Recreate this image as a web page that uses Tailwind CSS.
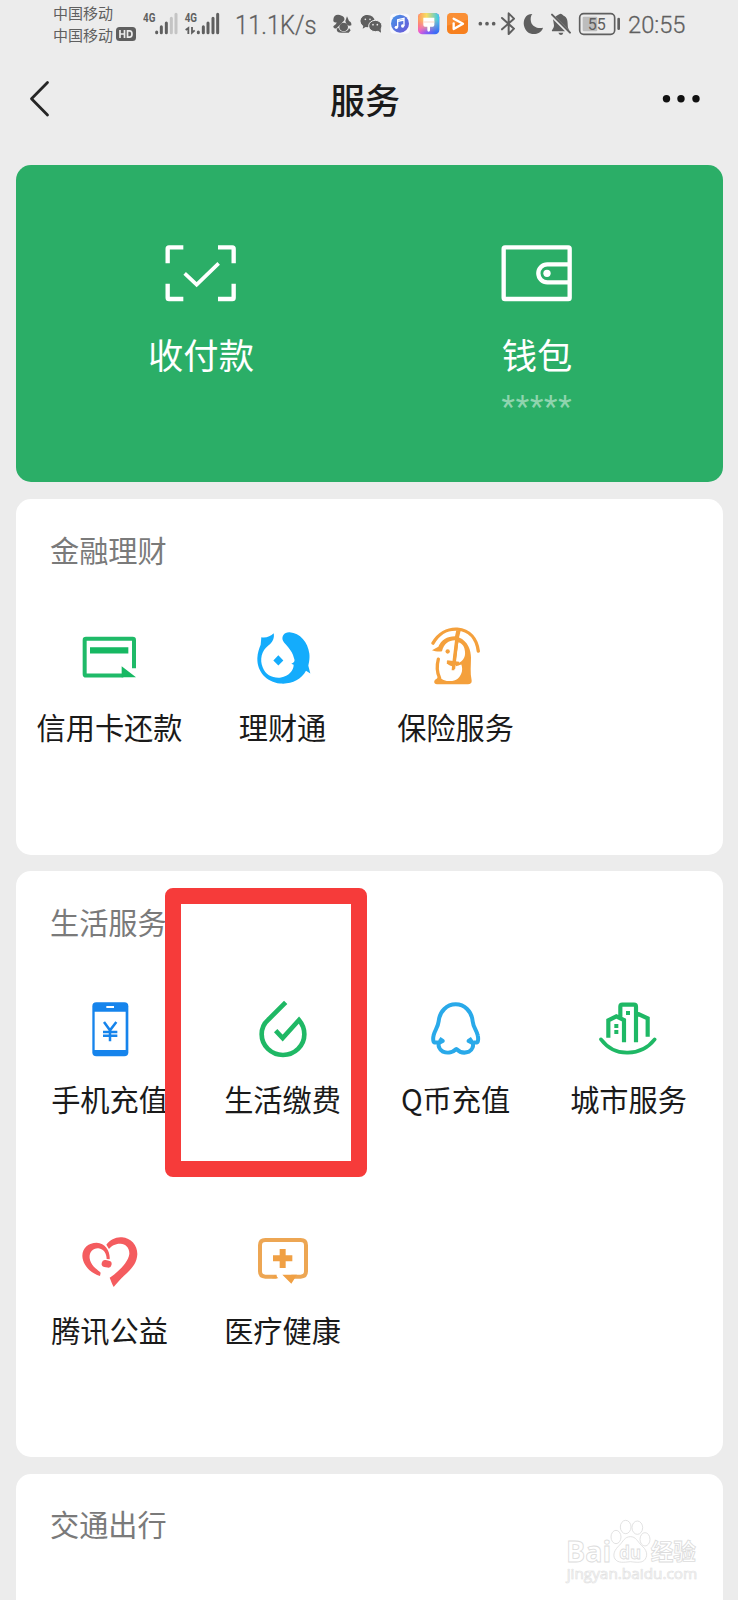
<!DOCTYPE html>
<html lang="zh-CN">
<head>
<meta charset="utf-8">
<title>服务</title>
<script src="https://cdn.jsdelivr.net/npm/@tailwindcss/browser@4"></script>
</head>
<body class="bg-[#ececec] font-['Noto_Sans_CJK_SC',sans-serif] text-[#1a1a1a]">
<div class="relative flex h-[1600px] w-[738px] flex-col overflow-hidden">

  <!-- status bar -->
  <div class="flex h-[50px] shrink-0 items-start pl-[53px] text-[#5f5f5f]">
    <div class="flex w-[90px] flex-col pt-[2px] text-[15px] leading-[21.5px]">
      <span class="whitespace-nowrap">中国移动</span>
      <div class="flex items-center gap-[3px]"><span class="whitespace-nowrap">中国移动</span>
        <svg class="h-[14px] w-[20px]" viewBox="0 0 20 14"><rect width="20" height="14" rx="3.5" fill="#5f5f5f"/><path d="M4 3v8M4 7h4.500M8.500 3v8M11.500 3.800v6.400h2q2.500 0 2.500-3.200t-2.500-3.200z" fill="none" stroke="#ececec" stroke-width="1.700"/></svg>
      </div>
    </div>
    <svg class="h-[50px] w-[40px]" viewBox="309 0 120 150"><text x="309" y="67" font-family="Roboto, sans-serif" font-weight="700" font-size="38" textLength="37" lengthAdjust="spacingAndGlyphs" fill="#5f5f5f">4G</text><g stroke-width="9" stroke-linecap="round"><path d="M350 96v2M364 80v18M379 69v29" stroke="#5f5f5f"/><path d="M394 55v43M408 43v55" stroke="#c4c4c4"/></g></svg>
    <svg class="h-[50px] w-[52px]" viewBox="429 0 156 150"><text x="434" y="67" font-family="Roboto, sans-serif" font-weight="700" font-size="38" textLength="37" lengthAdjust="spacingAndGlyphs" fill="#5f5f5f">4G</text><g fill="none" stroke="#5f5f5f"><path d="M437 90l8-6v18M456 81v17l8-7" stroke-width="5.500"/><path d="M475 96v2M490 80v18M504 69v29M519 55v43M533 43v55" stroke-width="9" stroke-linecap="round"/></g></svg>
    <svg class="h-[50px] w-[95px]" viewBox="0 0 95 50"><text x="0" y="33.700" font-family="Roboto, sans-serif" font-weight="300" font-size="25" textLength="81.500" lengthAdjust="spacingAndGlyphs" fill="#5f5f5f" stroke="#5f5f5f" stroke-width=".3">11.1K/s</text></svg>
    <!-- notification icons -->
    <svg class="h-[50px] w-[25px]" viewBox="30 0 75 150" fill="#5f5f5f"><path d="M40 60C40 45 52 41 65 47C75 51 76 60 69 65L54 80C48 88 40 87 40 79C45 75 49 72 50 67C44 69 39 66 40 60z"/><path d="M76 63L81 49L87 63C93 65 95 70 94 76C86 80 78 74 76 63z"/><circle cx="71" cy="81" r="13"/><path d="M50 86C50 95 55 98 64 98H86L92 91L87 84C85 96 62 102 55 83z"/></svg>
    <svg class="h-[50px] w-[30px]" viewBox="105 0 90 150" fill="#5f5f5f"><path d="M143 45c-12 0-21 8-21 18 0 6 3 11 8 14l-2 9 9-5 7 1z"/><ellipse cx="143" cy="63" rx="21" ry="18"/><ellipse cx="166" cy="78" rx="20" ry="17" stroke="#ececec" stroke-width="3"/><path d="M172 91l11 7-1-12z"/><g fill="#ececec"><circle cx="136" cy="58" r="2.500"/><circle cx="150" cy="58" r="2.500"/><circle cx="159" cy="74" r="2.500"/><circle cx="172" cy="74" r="2.500"/></g></svg>
    <svg class="h-[50px] w-[29px]" viewBox="195 0 87 150"><defs><linearGradient id="music" x2="1" y2="1"><stop stop-color="#4696e8"/><stop offset="1" stop-color="#6a55d8"/></linearGradient></defs><rect x="210" y="41" width="60" height="60" rx="13" fill="#f8f8fc"/><circle cx="240" cy="71" r="27" fill="url(#music)"/><path d="M233 82V59l19-4v23M233 64l19-4" fill="none" stroke="#fff" stroke-width="4"/><circle cx="229" cy="82" r="5" fill="#fff"/><circle cx="248" cy="78" r="5" fill="#fff"/></svg>
    <svg class="h-[50px] w-[29px]" viewBox="282 0 87 150"><defs><linearGradient id="theme" x2="1" y2=".6"><stop offset=".05" stop-color="#ff4f72"/><stop offset=".4" stop-color="#f45ccf"/><stop offset=".7" stop-color="#8a5bf5"/><stop offset="1" stop-color="#3d6cf5"/></linearGradient><linearGradient id="themeTop" x2="1"><stop stop-color="#ff9860"/><stop offset=".4" stop-color="#f7dc63"/><stop offset="1" stop-color="#31c9ee"/></linearGradient><linearGradient id="fade" x2="0" y2="1"><stop offset=".3" stop-color="#fff"/><stop offset=".9" stop-color="#000"/></linearGradient><mask id="topMask"><rect x="294" y="39" width="64" height="64" fill="url(#fade)"/></mask></defs><rect x="294" y="39" width="64" height="64" rx="13" fill="url(#theme)"/><rect x="294" y="39" width="64" height="64" rx="13" fill="url(#themeTop)" mask="url(#topMask)"/><path d="M310 53h33v22q0 5-5 5h-8v11q0 4-4 4t-4-4V80h-7q-5 0-5-5z" fill="#fff"/><path d="M310 66h33" stroke="#ffd9c8" stroke-width="3"/></svg>
    <svg class="h-[50px] w-[30px]" viewBox="369 0 90 150"><rect x="381" y="39" width="63" height="63" rx="13" fill="#f7801e"/><path d="M381 52q0-13 13-13h37q13 0 13 13v7l-63 18z" fill="#fb9a45" opacity=".6"/><path d="M401 56L429 71L401 87V70" fill="none" stroke="#fff" stroke-width="7" stroke-linejoin="round" stroke-linecap="round"/></svg>
    <svg class="h-[50px] w-[26px]" viewBox="459 0 78 150" fill="#5f5f5f"><circle cx="481" cy="71" r="5.500"/><circle cx="501" cy="71" r="5.500"/><circle cx="521" cy="71" r="5.500"/></svg>
    <svg class="h-[50px] w-[21px]" viewBox="537 0 63 150"><path d="M546 54L582 86L566 102V40L582 56L546 88" fill="none" stroke="#5f5f5f" stroke-width="6" stroke-linejoin="round" stroke-linecap="round"/></svg>
    <svg class="h-[50px] w-[27px]" viewBox="600 0 81 150"><path d="M637 42C615 42 609 62 612 77C616 96 633 106 650 101C661 98 668 90 669 83C653 87 636 79 633 65C631 56 632 48 637 42z" fill="#5f5f5f"/></svg>
    <svg class="h-[50px] w-[28px]" viewBox="681 0 84 150"><path d="M706 50C712 46 716 43 722 41C728 43 729 46 734 49C745 56 742 70 744 83L749 93zM699 58L735 94H696C694 90 702 86 702 76zM715 98h15q-2 7-7 7t-8-7z" fill="#5f5f5f"/><path d="M696 44L750 98" stroke="#5f5f5f" stroke-width="6" stroke-linecap="round"/></svg>
    <svg class="h-[50px] w-[50px]" viewBox="765 0 150 150"><rect x="788" y="50" width="44" height="44" rx="4" fill="#bdbdbd"/><rect x="779" y="41" width="105" height="62" rx="12" fill="none" stroke="#5f5f5f" stroke-width="5"/><path d="M896 57v29" stroke="#5f5f5f" stroke-width="8" stroke-linecap="round"/><text x="803" y="90" font-family="Roboto, sans-serif" font-size="50" textLength="54" lengthAdjust="spacingAndGlyphs" fill="#5f5f5f">55</text></svg>
    <svg class="ml-[3px] h-[50px] w-[62px]" viewBox="0 0 62 50"><text x="0" y="33.300" font-family="Roboto, sans-serif" font-weight="300" font-size="24.500" textLength="57.500" lengthAdjust="spacingAndGlyphs" fill="#5f5f5f" stroke="#5f5f5f" stroke-width=".3">20:55</text></svg>
  </div>

  <!-- title bar -->
  <div class="flex h-[114.5px] shrink-0 items-start justify-between pr-[34px] pl-[26px]">
    <svg class="mt-[25px] h-[48px] w-[50px]" viewBox="0 0 50 48" fill="none" stroke="#262626" stroke-width="2.800" stroke-linejoin="round" stroke-linecap="round"><path d="M21.500 7.500L5.500 23.700L21.500 40"/></svg>
    <h1 class="pt-[23.5px] text-[35px] font-medium leading-[50px]">服务</h1>
    <svg class="mt-[25px] h-[48px] w-[50px]" viewBox="654 75 50 48" fill="#111"><circle cx="666.500" cy="98.700" r="3.700"/><circle cx="681" cy="98.700" r="3.700"/><circle cx="696" cy="98.700" r="3.700"/></svg>
  </div>

  <main class="flex flex-col gap-[16.5px] px-[15.5px]">
    <section class="flex h-[317.5px] shrink-0 justify-center rounded-[15px] bg-[#2bae67] text-white">
      <div class="flex w-[336px] flex-col items-center pt-[76px]">
        <svg class="h-[64px] w-[80px]" viewBox="93 62 240 192" fill="none" stroke="#fff" stroke-width="13"><path d="M113 129V85q0-4 4-4h43M264 81h43q4 0 4 4v44M311 190v42q0 4-4 4h-43M160 236h-43q-4 0-4-4v-42"/><path d="M164 159L200 193L266 129" stroke-width="11"/></svg>
        <span class="mt-[24.5px] text-[35.3px] leading-[50px]">收付款</span>
      </div>
      <div class="flex w-[336px] flex-col items-center pt-[76px]">
        <svg class="h-[64px] w-[80px]" viewBox="1102 62 240 192" fill="none" stroke="#fff" stroke-width="13"><rect x="1122" y="81" width="198" height="155" rx="4"/><path d="M1320 132h-67a27 27 0 0 0 0 54h67"/><circle cx="1252" cy="159" r="11" fill="#fff" stroke="none"/></svg>
        <span class="mt-[24.5px] text-[35.3px] leading-[50px]">钱包</span>
        <span class="mt-[13px] font-['Roboto',sans-serif] text-[31px] leading-[30px] tracking-[0.8px] text-[#8fd4ae]">*****</span>
      </div>
    </section>

    <section class="h-[356px] shrink-0 rounded-[15px] bg-white px-[7.5px] pt-[30px]">
      <h2 class="pl-[27px] text-[29.2px] leading-[40px] text-[#7a7a7a]">金融理财</h2>
      <div class="mt-[58.5px] grid grid-cols-[repeat(4,173px)] text-[29.2px] leading-[40px] whitespace-nowrap">
        <div class="flex flex-col items-center gap-[18.5px]">
          <svg class="size-[60px]" viewBox="179 52.500 180 180"><path d="M341 176V92q0-4-4-4H197q-4 0-4 4v102q0 4 4 4h112" fill="none" stroke="#1fba68" stroke-width="12"/><path d="M209 113h115v19H209zM304 170L347 203H304z" fill="#16b862"/></svg>
          <span>信用卡还款</span>
        </div>
        <div class="flex flex-col items-center gap-[18.5px]">
          <svg class="size-[60px]" viewBox="67 52.500 180 180"><path fill="#14acfc" d="M92 83C106 86 120 80 129 71C132 84 127 97 113 108C92 124 87 151 96 173C105 197 128 207 151 204C174 201 189 183 189 166L182 163C191 159 194 153 190 146C184 120 164 107 157 94C151 80 161 67 177 68C208 70 232 98 236 132C238 148 234 163 233 169L239 192L226 184C211 212 181 225 148 222C108 217 79 187 80 146C81 130 85 118 90 106zM143 137L158 153L143 168L128 153z"/></svg>
          <span>理财通</span>
        </div>
        <div class="flex flex-col items-center gap-[18.5px]">
          <svg class="size-[60px]" viewBox="587 52.500 180 180" fill="none" stroke="#f4a03c" stroke-linecap="round"><path d="M608 101C624 73 651 57 681 59C718 62 739 88 744 125" stroke-width="10"/><path d="M605 122L624 112C632 91 650 80 674 80L678 62L691 64L686 84C713 95 722 122 722 145C722 168 719 190 724 213C725 221 720 224 713 224H620C609 224 609 212 620 207L624 200C638 217 668 219 682 208C698 194 697 175 693 165L677 170L676 164C696 158 706 145 704 127C703 110 696 102 684 98L672 182H664L665 170C656 168 649 163 649 156L666 159L674 92C655 92 640 103 635 125C627 128 613 125 605 122z" fill="#f4a03c" stroke="none"/><path d="M624 149C619 168 620 190 628 206" stroke-width="10"/><circle cx="652" cy="126" r="6.500" fill="#f4a03c" stroke="none"/><path d="M650 158l36 4" stroke-width="11" stroke-linecap="butt"/><path d="M682 75L670 178" stroke-width="9" stroke-linecap="butt"/></svg>
          <span>保险服务</span>
        </div>
      </div>
    </section>

    <section class="h-[586px] shrink-0 rounded-[15px] bg-white px-[7.5px] pt-[29.5px]">
      <h2 class="pl-[27px] text-[29.2px] leading-[40px] text-[#7a7a7a]">生活服务</h2>
      <div class="mt-[58.5px] grid grid-cols-[repeat(4,173px)] gap-y-[112.5px] text-[29.2px] leading-[40px] whitespace-nowrap">
        <div class="flex flex-col items-center gap-[18.5px]">
          <svg class="size-[60px]" viewBox="179 357 180 180"><rect x="216" y="367" width="108" height="162" rx="12" fill="#1684ec"/><path d="M223 395h93v115h-93z" fill="#fff"/><path d="M258 381h23" stroke="#fff" stroke-width="6"/><path d="M251 426L269 451L288 426M269 451v33M248 456h43M248 467h43" fill="none" stroke="#1684ec" stroke-width="7.500"/></svg>
          <span>手机充值</span>
        </div>
        <div class="flex flex-col items-center gap-[18.5px]">
          <svg class="size-[60px]" viewBox="697 357 180 180"><path d="M795 367L742 420C728 432 723 447 723 463A64 62 0 0 0 851 463C851 448 846 433 835 420L786 474L765 452" fill="none" stroke="#1fb865" stroke-width="14"/></svg>
          <span>生活缴费</span>
        </div>
        <div class="flex flex-col items-center gap-[18.5px]">
          <svg class="size-[60px]" viewBox="136 57 180 180"><path d="M176 176L186 183L176 188L163 187C158 190 156 177 159 166C161 152 172 143 174 124C177 93 199 73 225 73S273 93 276 124C278 143 289 152 291 166C294 177 292 190 287 187L274 188L264 183L274 176M176 187C171 197 175 208 187 215C202 221 218 216 227 207C236 216 250 221 265 215C276 208 280 197 275 187" fill="none" stroke="#29a9e9" stroke-width="12" stroke-linejoin="round"/></svg>
          <span>Q币充值</span>
        </div>
        <div class="flex flex-col items-center gap-[18.5px]">
          <svg class="size-[60px]" viewBox="656 57 180 180" fill="none" stroke="#1fb865" stroke-width="12.500"><path d="M684 173V121L708 109L731 120V187M720 110V80q0-6 6-6h35q6 0 6 6V187M767 99L802 115V170"/><path d="M662 178C684 207 713 219 743 218S802 205 823 178" stroke-linecap="round" stroke-width="11"/><path d="M737 93h12v12h-12zM702 132h12v12h-12zM702 150h12v12h-12z" fill="#1fb865" stroke="none"/></svg>
          <span>城市服务</span>
        </div>
        <div class="flex flex-col items-center gap-[18.5px]">
          <svg class="size-[60px]" viewBox="149 60 180 180" fill="#f45c5f"><path d="M209 198C180 189 157 165 156 138C156 113 175 98 199 98C226 100 240 124 238 148L229 147C228 130 221 117 204 115C187 114 176 128 178 145C181 167 199 177 211 188z"/><path d="M228 104C240 89 257 80 275 82C302 84 321 106 321 132C320 162 300 180 281 197C269 209 261 218 250 231C245 222 242 212 238 203C258 190 294 159 297 132C298 113 285 100 269 101C254 101 243 108 236 117z"/><rect x="214" y="151" width="30" height="21" rx="10" transform="rotate(12 229 161)"/></svg>
          <span>腾讯公益</span>
        </div>
        <div class="flex flex-col items-center gap-[18.5px]">
          <svg class="size-[60px]" viewBox="668 60 180 180" fill="#f0a044"><path d="M739 200H705q-16 0-16-16V106q0-16 16-16H811q16 0 16 16V184q0 16-16 16H783" fill="none" stroke="#eda653" stroke-width="12"/><path d="M748 117h18v19h20v18h-20v20h-18v-20h-20v-18h20zM756 194H800L783 221zM734 194L744 205H725z"/></svg>
          <span>医疗健康</span>
        </div>
      </div>
    </section>

    <section class="h-[300px] shrink-0 rounded-[15px] bg-white px-[7.5px] pt-[29.5px]">
      <h2 class="pl-[27px] text-[29.2px] leading-[40px] text-[#7a7a7a]">交通出行</h2>
    </section>
  </main>

  <!-- highlight frame -->
  <div class="absolute top-[887.5px] left-[164.5px] h-[289px] w-[202.5px] rounded-[8px] border-16 border-[#f63b3a]"></div>

  <!-- watermark -->
  <svg class="absolute top-[1500px] left-[540px] h-[100px] w-[198px]" viewBox="0 0 594 300" fill="#fff" stroke="#dcdcdc" stroke-width="2.500">
    <g font-family="Open Sans, Noto Sans CJK SC, sans-serif" font-weight="700">
      <text x="78" y="185" font-size="88" textLength="136" lengthAdjust="spacingAndGlyphs">Bai</text>
      <ellipse cx="228" cy="111" rx="15" ry="20"/><ellipse cx="257" cy="81" rx="16" ry="20"/><ellipse cx="292" cy="83" rx="16" ry="20"/><ellipse cx="315" cy="118" rx="15" ry="20"/>
      <path d="M271 110C288 110 292 124 304 136C320 149 324 164 316 177C308 190 290 187 271 185C252 187 234 190 225 177C217 164 224 149 238 136C250 124 254 110 271 110z"/>
      <text x="238" y="177" font-size="52" textLength="65" lengthAdjust="spacingAndGlyphs">du</text>
      <text x="332" y="180" font-size="68" textLength="136" lengthAdjust="spacingAndGlyphs">经验</text>
    </g>
    <text x="80" y="237" font-family="Open Sans, sans-serif" font-size="42" stroke="#e2e2e2" stroke-width="2" textLength="392" lengthAdjust="spacingAndGlyphs">jingyan.baidu.com</text>
  </svg>
</div>
</body>
</html>
